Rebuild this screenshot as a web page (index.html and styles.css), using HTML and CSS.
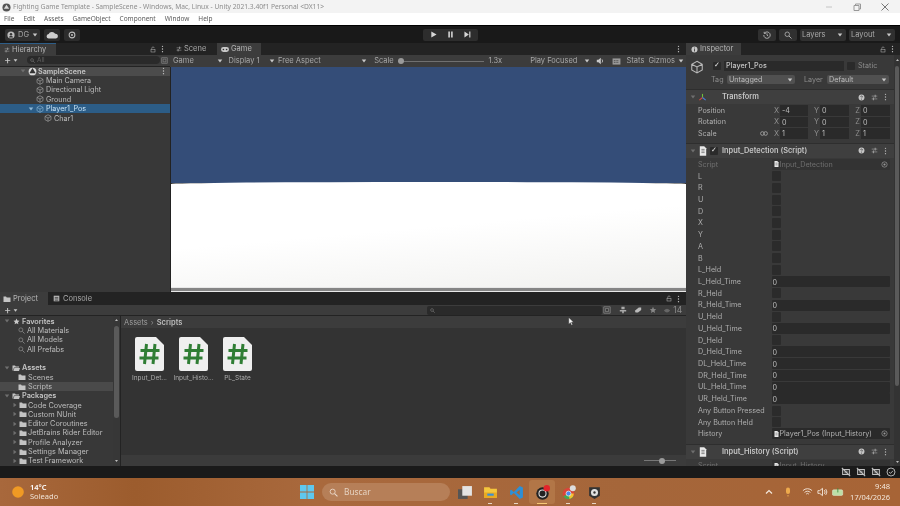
FILE: index.html
```html
<!DOCTYPE html>
<html lang="en">
<head>
<meta charset="utf-8">
<title>Unity Editor</title>
<link rel="stylesheet" href="styles.css">
</head>
<body>
<svg class="sprite" xmlns="http://www.w3.org/2000/svg">
  <symbol id="cube" viewBox="0 0 16 16"><path d="M8 1.500 14 4.800v6.600L8 14.700 2 11.400V4.800zM2 4.800 8 8l6-3.200M8 8v6.700" fill="none" stroke="currentColor" stroke-width="1.200"/></symbol>
  <symbol id="folder" viewBox="0 0 16 16"><path d="M1 3h5l1.500 2H15v9H1z" fill="currentColor"/></symbol>
  <symbol id="folderopen" viewBox="0 0 16 16"><path d="M1 3h5l1.500 2H14v2H4L2 13H1zM4.700 8H16l-2 6H2.800z" fill="currentColor"/></symbol>
  <symbol id="search" viewBox="0 0 16 16"><circle cx="6.500" cy="6.500" r="4.500" fill="none" stroke="currentColor" stroke-width="1.500"/><path d="m10 10 5 5" stroke="currentColor" stroke-width="1.800"/></symbol>
  <symbol id="dots" viewBox="0 0 4 12"><circle cx="2" cy="2" r="1"/><circle cx="2" cy="6" r="1"/><circle cx="2" cy="10" r="1"/></symbol>
  <symbol id="lock" viewBox="0 0 12 12"><path d="M3.500 5V3.200a2.500 2.200 0 0 1 5 0" fill="none" stroke="currentColor"/><rect x="2" y="5.500" width="8" height="5.500" fill="none" stroke="currentColor"/></symbol>
  <symbol id="caret" viewBox="0 0 8 8"><path d="M1 2h6L4 6z" fill="currentColor"/></symbol>
  <symbol id="tri" viewBox="0 0 8 8"><path d="M2 1v6l4-3z" fill="currentColor"/></symbol>
  <symbol id="help" viewBox="0 0 10 10"><circle cx="5" cy="5" r="4.200" fill="currentColor"/><path d="M3.700 4a1.300 1.200 0 1 1 1.900 1.100c-.5.300-.6.500-.6 1M5 7.200v.9" stroke="#3c3c3c" fill="none"/></symbol>
  <symbol id="sliders" viewBox="0 0 10 10"><path d="M1 3h8M1 7h8" stroke="currentColor"/><path d="M6 1v4M3.500 5v4" stroke="currentColor" stroke-width="1.500"/></symbol>
  <symbol id="pick" viewBox="0 0 10 10"><circle cx="5" cy="5" r="3.800" fill="none" stroke="currentColor"/><circle cx="5" cy="5" r="1.500" fill="currentColor"/></symbol>
  <symbol id="script" viewBox="0 0 10 12"><path d="M1 0h5.500L9 2.500V12H1z" fill="#e9e9e9"/><path d="M3 4h4M3 6h4M3 8h4" stroke="#555" stroke-width=".8"/></symbol>
  <symbol id="tray" viewBox="0 0 12 12"><path d="M2 3h8v6H2zM1 1l10 10" fill="none" stroke="currentColor" stroke-width="1.300"/><path d="M4 5h4M4 7h4" stroke="currentColor"/></symbol>
  <symbol id="csdoc" viewBox="0 0 29 34"><path d="M2 0h19l8 8v24a2 2 0 0 1-2 2H2a2 2 0 0 1-2-2V2a2 2 0 0 1 2-2z" fill="#efefef"/><path d="M11.500 7 9.500 27M20 7l-2 20M5.500 13.500h19M4.500 21h19" fill="none" stroke="#2f7d34" stroke-width="3"/></symbol>
</svg>

<div class="app">
  <header class="titlebar">
    <svg class="title-logo" viewBox="0 0 10 10"><circle cx="5" cy="5" r="4.500" fill="#555"/><path d="M5 2 8 6.500H2z" fill="#ddd"/></svg>
    <span class="title-text">Fighting Game Template - SampleScene - Windows, Mac, Linux - Unity 2021.3.40f1 Personal &lt;DX11&gt;</span>
    <div class="winctl">
      <svg class="winbtn" viewBox="0 0 10 10"><path d="M2 5h6" stroke="#c4c4c4"/></svg>
      <svg class="winbtn" viewBox="0 0 10 10"><path d="M2 3.500h5v5H2zM3.500 3.500V2h5v5H7" fill="none" stroke="#999"/></svg>
      <svg class="winbtn" viewBox="0 0 10 10"><path d="m1.500 1.500 7 7m0-7-7 7" stroke="#777"/></svg>
    </div>
  </header>
  <nav class="menubar">
    <span>File</span><span>Edit</span><span>Assets</span><span>GameObject</span><span>Component</span><span>Window</span><span>Help</span>
  </nav>

  <div class="toolbar">
    <div class="tb-left">
      <div class="tbtn tbtn-account">
        <svg class="ico8" viewBox="0 0 10 10"><circle cx="5" cy="5" r="4.500" fill="#bbb"/><circle cx="5" cy="4" r="1.500" fill="#333"/><path d="M2.500 8a2.500 2 0 0 1 5 0z" fill="#333"/></svg>
        <span>DG</span>
        <svg class="ico-caret"><use href="#caret"/></svg>
      </div>
      <div class="tbtn tbtn-icon">
        <svg class="ico-cloud" viewBox="0 0 14 9"><path d="M3 8.500a2.500 2.500 0 0 1-.3-5A4 3.500 0 0 1 10 3a2.800 2.800 0 0 1 1 5.500z" fill="#cfcfcf"/></svg>
      </div>
      <div class="tbtn tbtn-icon">
        <svg class="ico8" viewBox="0 0 10 10"><circle cx="5" cy="5" r="3.600" fill="none" stroke="#bbb" stroke-width="1.300"/><circle cx="5" cy="5" r="1.300" fill="#bbb"/></svg>
      </div>
    </div>
    <div class="playgroup">
      <svg class="playbtn" viewBox="0 0 8 8"><path d="M1.500 .5v7l6-3.500z" fill="#d6d6d6"/></svg>
      <svg class="playbtn playbtn-mid" viewBox="0 0 8 8"><path d="M1.500 .5h1.800v7H1.500zM4.700 .5h1.800v7H4.700z" fill="#d6d6d6"/></svg>
      <svg class="playbtn" viewBox="0 0 8 8"><path d="M.5 .5v7l5-3.500zM6 .5h1.300v7H6z" fill="#d6d6d6"/></svg>
    </div>
    <div class="tb-right">
      <div class="tbtn tbtn-hist">
        <svg class="ico8" viewBox="0 0 10 10"><path d="M2 2.500A4 4 0 1 1 1 5M1.500 1v2h2M5 3v2.300l1.500 1" fill="none" stroke="#ccc"/></svg>
      </div>
      <div class="tbtn tbtn-hist">
        <svg class="ico8 ico-grey"><use href="#search"/></svg>
      </div>
      <div class="tbtn tbtn-drop"><span>Layers</span><svg class="ico-caret"><use href="#caret"/></svg></div>
      <div class="tbtn tbtn-drop"><span>Layout</span><svg class="ico-caret"><use href="#caret"/></svg></div>
    </div>
  </div>

  <main class="workspace">
    <div class="leftcol">
      <div class="toprow">
        <section class="hierarchy">
          <div class="tabbar">
            <div class="tab tab-active tab-hier">
              <svg class="ico6"><use href="#sliders"/></svg><span>Hierarchy</span>
            </div>
            <div class="tab-tools">
              <svg class="ico-lock"><use href="#lock"/></svg>
              <svg class="ico-dots"><use href="#dots"/></svg>
            </div>
          </div>
          <div class="subbar subbar-hier">
            <span class="plus">+</span><svg class="ico-caret ico-caret-s"><use href="#caret"/></svg>
            <div class="searchbox">
              <svg class="ico-mini"><use href="#search"/></svg><span>All</span>
            </div>
            <svg class="ico-square" viewBox="0 0 10 10"><path d="M1 1h8v8H1zM3 3h4v4H3z" fill="none" stroke="#888"/></svg>
          </div>
          <div class="tree">
            <div class="row row-scene">
              <svg class="tri tri-open"><use href="#tri"/></svg>
              <svg class="ico-unity" viewBox="0 0 10 10"><circle cx="5" cy="5" r="4.300" fill="#ddd"/><path d="M5 1 8.500 7H1.500z" fill="#333"/></svg>
              <b>SampleScene</b>
              <svg class="ico-dots ico-dots-end"><use href="#dots"/></svg>
            </div>
            <div class="row indent1"><svg class="cube"><use href="#cube"/></svg><span>Main Camera</span></div>
            <div class="row indent1"><svg class="cube"><use href="#cube"/></svg><span>Directional Light</span></div>
            <div class="row indent1"><svg class="cube"><use href="#cube"/></svg><span>Ground</span></div>
            <div class="row row-sel indent0">
              <svg class="tri tri-open"><use href="#tri"/></svg>
              <svg class="cube"><use href="#cube"/></svg><span>Player1_Pos</span>
            </div>
            <div class="row indent2"><svg class="cube"><use href="#cube"/></svg><span>Char1</span></div>
          </div>
        </section>

        <section class="game">
          <div class="tabbar">
            <div class="tab tab-scene">
              <svg class="ico6"><use href="#sliders"/></svg><span>Scene</span>
            </div>
            <div class="tab tab-active tab-game">
              <svg class="ico-pad" viewBox="0 0 10 6"><rect width="10" height="6" rx="3" fill="#c8c8c8"/><circle cx="3" cy="3" r="1" fill="#333"/><circle cx="7" cy="3" r="1" fill="#333"/></svg>
              <span>Game</span>
            </div>
            <div class="tab-tools">
              <svg class="ico-dots"><use href="#dots"/></svg>
            </div>
          </div>
          <div class="gamebar">
            <div class="gb gb-game"><span>Game</span><svg class="ico-caret"><use href="#caret"/></svg></div>
            <div class="gb gb-display"><span>Display 1</span><svg class="ico-caret"><use href="#caret"/></svg></div>
            <div class="gb gb-aspect"><span>Free Aspect</span><svg class="ico-caret"><use href="#caret"/></svg></div>
            <div class="gb gb-scale">
              <span>Scale</span>
              <div class="slider"><i class="thumb"></i></div>
              <span>1.3x</span>
            </div>
            <div class="gb gb-play"><span>Play Focused</span><svg class="ico-caret"><use href="#caret"/></svg></div>
            <svg class="gb-audio" viewBox="0 0 10 10"><path d="M1 3.500h2L6 1v8L3 6.500H1z" fill="#c8c8c8"/><path d="M7.500 3a3 3 0 0 1 0 4" stroke="#c8c8c8" fill="none"/></svg>
            <svg class="gb-grid" viewBox="0 0 10 8"><path d="M.5.500h9v7h-9z" fill="#999"/><path d="M2 3h6M2 5h6" stroke="#333" stroke-dasharray="1 1"/></svg>
            <span class="gb-stats">Stats</span>
            <div class="gb gb-gizmos"><span>Gizmos</span><svg class="ico-caret"><use href="#caret"/></svg></div>
          </div>
          <div class="viewport">
            <div class="sky"></div>
            <div class="ground"></div>
            <div class="hscroll"></div>
          </div>
        </section>
      </div>

      <section class="project">
        <div class="tabbar tabbar-project">
          <div class="tab tab-active tab-proj">
            <svg class="ico-folder"><use href="#folder"/></svg><span>Project</span>
          </div>
          <div class="tab tab-console">
            <svg class="ico-cons" viewBox="0 0 10 10"><path d="M1 1h8v8H1z" fill="#b5b5b5"/><path d="M2.500 3.500h5M2.500 5.500h5M2.500 7.500h5" stroke="#333"/></svg>
            <span>Console</span>
          </div>
          <div class="tab-tools">
            <svg class="ico-lock"><use href="#lock"/></svg>
            <svg class="ico-dots"><use href="#dots"/></svg>
          </div>
        </div>
        <div class="subbar subbar-project">
          <span class="plus">+</span><svg class="ico-caret ico-caret-s"><use href="#caret"/></svg>
          <div class="searchbox searchbox-proj"><svg class="ico-mini"><use href="#search"/></svg></div>
          <svg class="ptool" viewBox="0 0 10 10"><path d="M1 1h8v8H1zM3 3h4v4H3z" fill="none" stroke="#888"/></svg>
          <svg class="ptool" viewBox="0 0 10 10"><path d="M3 1h4v3H3zM1 5h8v2H6v2H4V7H1z" fill="#aaa"/></svg>
          <svg class="ptool" viewBox="0 0 10 10"><path d="M1 6 6 2h3v3L5 8H2z" fill="#bbb"/></svg>
          <svg class="ptool" viewBox="0 0 10 10"><path d="m5 1 1.200 2.700 2.800.3-2.100 1.900.6 2.800L5 7.300 2.500 8.700l.6-2.800L1 4l2.800-.3z" fill="#888"/></svg>
          <div class="hidden-count">
            <svg class="ptool-eye" viewBox="0 0 12 8"><path d="M1 4q5-6 10 0-5 6-10 0z" fill="#666"/></svg>
            <span>14</span>
          </div>
        </div>
        <div class="projbody">
          <div class="projtree">
            <div class="projlist">
              <div class="row"><svg class="tri tri-open"><use href="#tri"/></svg><svg class="ico-star" viewBox="0 0 10 10"><path d="m5 .8 1.300 2.800 3 .4-2.200 2 .6 3L5 7.500 2.300 9l.6-3L.7 4l3-.4z" fill="#c8c8c8"/></svg><b>Favorites</b></div>
              <div class="row pindent"><svg class="ico-find"><use href="#search"/></svg><span>All Materials</span></div>
              <div class="row pindent"><svg class="ico-find"><use href="#search"/></svg><span>All Models</span></div>
              <div class="row pindent"><svg class="ico-find"><use href="#search"/></svg><span>All Prefabs</span></div>
              <div class="row"></div>
              <div class="row"><svg class="tri tri-open"><use href="#tri"/></svg><svg class="ico-folder"><use href="#folderopen"/></svg><b>Assets</b></div>
              <div class="row pindent"><svg class="ico-folder"><use href="#folder"/></svg><span>Scenes</span></div>
              <div class="row pindent row-hl"><svg class="ico-folder"><use href="#folder"/></svg><span>Scripts</span></div>
              <div class="row"><svg class="tri tri-open"><use href="#tri"/></svg><svg class="ico-folder"><use href="#folderopen"/></svg><b>Packages</b></div>
              <div class="row pkg"><svg class="tri"><use href="#tri"/></svg><svg class="ico-folder"><use href="#folder"/></svg><span>Code Coverage</span></div>
              <div class="row pkg"><svg class="tri"><use href="#tri"/></svg><svg class="ico-folder"><use href="#folder"/></svg><span>Custom NUnit</span></div>
              <div class="row pkg"><svg class="tri"><use href="#tri"/></svg><svg class="ico-folder"><use href="#folder"/></svg><span>Editor Coroutines</span></div>
              <div class="row pkg"><svg class="tri"><use href="#tri"/></svg><svg class="ico-folder"><use href="#folder"/></svg><span>JetBrains Rider Editor</span></div>
              <div class="row pkg"><svg class="tri"><use href="#tri"/></svg><svg class="ico-folder"><use href="#folder"/></svg><span>Profile Analyzer</span></div>
              <div class="row pkg"><svg class="tri"><use href="#tri"/></svg><svg class="ico-folder"><use href="#folder"/></svg><span>Settings Manager</span></div>
              <div class="row pkg"><svg class="tri"><use href="#tri"/></svg><svg class="ico-folder"><use href="#folder"/></svg><span>Test Framework</span></div>
            </div>
            <div class="vscroll vscroll-proj">
              <svg class="arrow arrow-up"><use href="#caret"/></svg>
              <i class="vthumb vthumb-proj"></i>
              <svg class="arrow arrow-down"><use href="#caret"/></svg>
            </div>
          </div>
          <div class="projmain">
            <div class="crumbs"><span>Assets</span><span class="crumb-sep">›</span><b>Scripts</b></div>
            <div class="assets">
              <figure class="asset"><svg class="doc"><use href="#csdoc"/></svg><figcaption>Input_Det...</figcaption></figure>
              <figure class="asset"><svg class="doc"><use href="#csdoc"/></svg><figcaption>Input_Histo...</figcaption></figure>
              <figure class="asset"><svg class="doc"><use href="#csdoc"/></svg><figcaption>PL_State</figcaption></figure>
            </div>
            <div class="projfoot"><div class="zoomslider"><i class="zoomthumb"></i></div></div>
          </div>
        </div>
      </section>
    </div>

    <aside class="inspector">
      <div class="tabbar">
        <div class="tab tab-active tab-insp">
          <svg class="ico-info" viewBox="0 0 10 10"><circle cx="5" cy="5" r="4.300" fill="#c8c8c8"/><path d="M5 2.300v1.200M5 4.500v3.300" stroke="#3c3c3c" stroke-width="1.300"/></svg>
          <span>Inspector</span>
        </div>
        <div class="tab-tools">
          <svg class="ico-lock"><use href="#lock"/></svg>
          <svg class="ico-dots"><use href="#dots"/></svg>
        </div>
      </div>
      <div class="insp-wrap">
        <div class="insp-content">
          <div class="objhead">
            <svg class="objcube"><use href="#cube"/></svg>
            <div class="objlines">
              <div class="objline">
                <span class="check check-on">✓</span>
                <div class="namefield">Player1_Pos</div>
                <span class="check"></span>
                <span class="dim">Static</span>
                <svg class="ico-caret"><use href="#caret"/></svg>
              </div>
              <div class="objline objline2">
                <span class="dim tag-l">Tag</span>
                <div class="dropdown dd-tag"><span>Untagged</span><svg class="ico-caret"><use href="#caret"/></svg></div>
                <span class="dim layer-l">Layer</span>
                <div class="dropdown dd-layer"><span>Default</span><svg class="ico-caret"><use href="#caret"/></svg></div>
              </div>
            </div>
          </div>

          <div class="comp-head comp-first">
            <svg class="tri tri-open"><use href="#tri"/></svg>
            <svg class="comp-ico" viewBox="0 0 10 10"><path d="M5 5V1" stroke="#6fbf3a" stroke-width="1.200"/><path d="M5 5 1.500 8" stroke="#d9473a" stroke-width="1.200"/><path d="M5 5l3.500 3" stroke="#4a7fd9" stroke-width="1.200"/></svg>
            <b class="comp-title-t">Transform</b>
            <div class="comp-tools">
              <svg class="ct-help"><use href="#help"/></svg>
              <svg class="ct-sl"><use href="#sliders"/></svg>
              <svg class="ct-dots"><use href="#dots"/></svg>
            </div>
          </div>
          <div class="vec-row">
            <span class="lbl">Position</span><span></span>
            <span class="ax">X</span><span class="vf">-4</span><span class="ax">Y</span><span class="vf">0</span><span class="ax">Z</span><span class="vf">0</span>
          </div>
          <div class="vec-row">
            <span class="lbl">Rotation</span><span></span>
            <span class="ax">X</span><span class="vf">0</span><span class="ax">Y</span><span class="vf">0</span><span class="ax">Z</span><span class="vf">0</span>
          </div>
          <div class="vec-row">
            <span class="lbl">Scale</span>
            <svg class="link" viewBox="0 0 10 6"><circle cx="3" cy="3" r="2.300" fill="none" stroke="#aaa"/><circle cx="7" cy="3" r="2.300" fill="none" stroke="#aaa"/></svg>
            <span class="ax">X</span><span class="vf">1</span><span class="ax">Y</span><span class="vf">1</span><span class="ax">Z</span><span class="vf">1</span>
          </div>

          <div class="comp-head comp-second">
            <svg class="tri tri-open"><use href="#tri"/></svg>
            <svg class="comp-script"><use href="#script"/></svg>
            <span class="check check-on check-comp">✓</span>
            <b>Input_Detection (Script)</b>
            <div class="comp-tools">
              <svg class="ct-help"><use href="#help"/></svg>
              <svg class="ct-sl"><use href="#sliders"/></svg>
              <svg class="ct-dots"><use href="#dots"/></svg>
            </div>
          </div>
          <div class="prop prop-script">
            <span class="lbl lbl-dim">Script</span>
            <div class="objfield objfield-dim">
              <svg class="of-ico"><use href="#script"/></svg><span>Input_Detection</span>
              <svg class="of-pick"><use href="#pick"/></svg>
            </div>
          </div>
          <div class="prop"><span class="lbl">L</span><span class="cb"></span></div>
          <div class="prop"><span class="lbl">R</span><span class="cb"></span></div>
          <div class="prop"><span class="lbl">U</span><span class="cb"></span></div>
          <div class="prop"><span class="lbl">D</span><span class="cb"></span></div>
          <div class="prop"><span class="lbl">X</span><span class="cb"></span></div>
          <div class="prop"><span class="lbl">Y</span><span class="cb"></span></div>
          <div class="prop"><span class="lbl">A</span><span class="cb"></span></div>
          <div class="prop"><span class="lbl">B</span><span class="cb"></span></div>
          <div class="prop"><span class="lbl">L_Held</span><span class="cb"></span></div>
          <div class="prop"><span class="lbl">L_Held_Time</span><span class="numf">0</span></div>
          <div class="prop"><span class="lbl">R_Held</span><span class="cb"></span></div>
          <div class="prop"><span class="lbl">R_Held_Time</span><span class="numf">0</span></div>
          <div class="prop"><span class="lbl">U_Held</span><span class="cb"></span></div>
          <div class="prop"><span class="lbl">U_Held_Time</span><span class="numf">0</span></div>
          <div class="prop"><span class="lbl">D_Held</span><span class="cb"></span></div>
          <div class="prop"><span class="lbl">D_Held_Time</span><span class="numf">0</span></div>
          <div class="prop"><span class="lbl">DL_Held_Time</span><span class="numf">0</span></div>
          <div class="prop"><span class="lbl">DR_Held_Time</span><span class="numf">0</span></div>
          <div class="prop"><span class="lbl">UL_Held_Time</span><span class="numf">0</span></div>
          <div class="prop"><span class="lbl">UR_Held_Time</span><span class="numf">0</span></div>
          <div class="prop"><span class="lbl">Any Button Pressed</span><span class="cb"></span></div>
          <div class="prop"><span class="lbl">Any Button Held</span><span class="cb"></span></div>
          <div class="prop">
            <span class="lbl">History</span>
            <div class="objfield">
              <svg class="of-ico"><use href="#script"/></svg><span>Player1_Pos (Input_History)</span>
              <svg class="of-pick"><use href="#pick"/></svg>
            </div>
          </div>

          <div class="comp-head comp-third">
            <svg class="tri tri-open"><use href="#tri"/></svg>
            <svg class="comp-script"><use href="#script"/></svg>
            <b class="comp-title-h">Input_History (Script)</b>
            <div class="comp-tools">
              <svg class="ct-help"><use href="#help"/></svg>
              <svg class="ct-sl"><use href="#sliders"/></svg>
              <svg class="ct-dots"><use href="#dots"/></svg>
            </div>
          </div>
          <div class="prop prop-script">
            <span class="lbl lbl-dim">Script</span>
            <div class="objfield objfield-dim"><svg class="of-ico"><use href="#script"/></svg><span>Input_History</span></div>
          </div>
        </div>
        <div class="vscroll vscroll-insp">
          <svg class="arrow arrow-up"><use href="#caret"/></svg>
          <i class="vthumb vthumb-insp"></i>
          <svg class="arrow arrow-down"><use href="#caret"/></svg>
        </div>
      </div>
    </aside>
  </main>

  <div class="statusbar">
    <svg class="st-ico"><use href="#tray"/></svg>
    <svg class="st-ico"><use href="#tray"/></svg>
    <svg class="st-ico"><use href="#tray"/></svg>
    <svg class="st-ico" viewBox="0 0 12 12"><circle cx="6" cy="6" r="4.800" fill="none" stroke="#ccc"/><path d="m3.800 6 1.600 1.700 3-3.200" fill="none" stroke="#ccc"/></svg>
  </div>

  <footer class="taskbar">
    <div class="weather">
      <svg class="sun" viewBox="0 0 12 12"><circle cx="6" cy="6" r="5.800" fill="#f09a24"/></svg>
      <div class="weather-txt"><span class="temp">14°C</span><span>Soleado</span></div>
    </div>
    <div class="tb-center">
      <svg class="winlogo" viewBox="0 0 14 14"><path d="M0 0h6.600v6.600H0zM7.400 0H14v6.600H7.400zM0 7.400h6.600V14H0zM7.400 7.400H14V14H7.400z" fill="#5fc8ee"/></svg>
      <div class="tsearch"><svg class="ts-ico"><use href="#search"/></svg><span>Buscar</span></div>
      <div class="apps">
        <div class="app-i app-first"><svg class="app-svg" viewBox="0 0 14 14"><rect x="0" y="4" width="9" height="9" fill="#555"/><rect x="4" y="1" width="9" height="9" fill="#e4e4e4"/></svg></div>
        <div class="app-i app-run"><svg class="app-svg" viewBox="0 0 14 14"><path d="M1 2h5l1 1.500h6V12H1z" fill="#f5c63c"/><rect x="1" y="7" width="12" height="5" fill="#e8a922"/><rect x="4" y="8" width="6" height="2" fill="#3b8fd6"/></svg></div>
        <div class="app-i app-run"><svg class="app-svg" viewBox="0 0 14 14"><path d="M10 1 4.500 6.500 2 4.500 1 5.200v3.600l1 .7 2.500-2L10 13l3-1.300V2.300zM10 4.500v5L7 7z" fill="#2d8fd5"/></svg></div>
        <div class="app-i app-active"><svg class="app-svg" viewBox="0 0 14 14"><circle cx="7" cy="8" r="5.800" fill="#222"/><circle cx="7" cy="8" r="3.300" fill="none" stroke="#ddd"/><circle cx="11" cy="3" r="3" fill="#e3242b"/></svg></div>
        <div class="app-i app-run"><svg class="app-svg" viewBox="0 0 14 14"><circle cx="7" cy="8" r="5.500" fill="#d9453a"/><path d="M2.200 10.500 7 8l4.800 2.500A5.500 5.500 0 0 1 2.200 10.500z" fill="#44a853"/><path d="M7 8l5 0a5.500 5.500 0 0 1-4 5z" fill="#f4c430"/><circle cx="7" cy="8" r="2.300" fill="#4a8af0" stroke="#eee" stroke-width=".7"/><circle cx="11" cy="3" r="2.800" fill="#ddd"/></svg></div>
        <div class="app-i app-run"><svg class="app-svg" viewBox="0 0 14 14"><path d="M2 2h10v8l-5 3-5-3z" fill="#333"/><circle cx="7" cy="7" r="3.300" fill="#e2e2e2"/><circle cx="7" cy="7" r="1.100" fill="#333"/></svg></div>
      </div>
    </div>
    <div class="systray">
      <svg class="tr-i tr-chev" viewBox="0 0 10 10"><path d="m2 6.500 3-3 3 3" fill="none" stroke="#f4e9de" stroke-width="1.200"/></svg>
      <svg class="tr-i tr-mic" viewBox="0 0 10 10"><rect x="3" y=".5" width="4" height="6.500" rx="2" fill="#eeaa4c"/><path d="M5 8v1.500" stroke="#eeaa4c"/></svg>
      <svg class="tr-i tr-wifi" viewBox="0 0 12 10"><path d="M1 3.500a7 7 0 0 1 10 0M2.800 5.500a4.500 4.500 0 0 1 6.400 0M4.500 7.300a2 2 0 0 1 3 0" fill="none" stroke="#f2e6da"/></svg>
      <svg class="tr-i tr-vol" viewBox="0 0 12 10"><path d="M1 3.500h2L6 1v8L3 6.500H1z" fill="none" stroke="#f2e6da"/><path d="M8 3a3 3 0 0 1 0 4M9.500 1.800a5 5 0 0 1 0 6.400" fill="none" stroke="#f2e6da"/></svg>
      <svg class="tr-i tr-bat" viewBox="0 0 14 10"><rect x=".5" y="2.500" width="12" height="6.500" rx="1.500" fill="#bde0a8" stroke="#e4efd8" stroke-width=".6"/><path d="M6.800 .5v5" stroke="#3d8f3d"/></svg>
      <div class="clock"><span>9:48</span><span>17/04/2026</span></div>
    </div>
  </footer>

  <svg class="cursor" viewBox="0 0 8 12"><path d="M1 .5v9l2.200-2 1.500 3.500 1.500-.7L4.700 7h2.800z" fill="#f5f5f5" stroke="#222" stroke-width=".5"/></svg>
</div>
</body>
</html>
```

FILE: styles.css
```css
* { box-sizing: border-box; }
html, body { margin: 0; padding: 0; height: 100%; background: #191919; overflow: hidden; }
.sprite { display: none; }
svg { display: block; flex: none; }

.app {
  position: relative;
  width: 900px;
  height: 506px;
  display: flex;
  flex-direction: column;
  font: 7.500px/1 Inter, "Noto Sans", sans-serif;
  color: #bdbdbd;
  filter: blur(.35px);
  overflow: hidden;
}

/* window chrome */
.titlebar {
  height: 13px;
  padding: 1px 0 0 2px;
  background: #f3f3f3;
  display: flex;
  align-items: center;
  color: #8d8d8d;
  font: 6.700px/1 "Noto Sans", sans-serif;
}
.title-logo { width: 9px; height: 9px; margin-right: 2px; }
.title-text { white-space: nowrap; }
.winctl { margin-left: auto; display: flex; gap: 18px; padding-right: 10px; }
.winbtn { width: 10px; height: 10px; }
.menubar {
  height: 12px;
  padding: 1px 0 0 4px;
  background: #fff;
  display: flex;
  align-items: center;
  gap: 9px;
  color: #5b5b5b;
  font: 6.500px/1 "Noto Sans", sans-serif;
}

/* main toolbar */
.toolbar {
  height: 18px;
  background: #191919;
  border-top: 1px solid #000;
  display: grid;
  grid-template-columns: 1fr auto 1fr;
  align-items: center;
  padding: 0 5px;
}
.tb-left, .tb-right { display: flex; align-items: center; gap: 4px; }
.tb-right { justify-content: flex-end; gap: 3px; }
.tbtn {
  height: 12px;
  background: #303030;
  border-radius: 2px;
  display: flex;
  align-items: center;
  justify-content: center;
  color: #a8a8a8;
}
.tbtn-account { width: 35px; gap: 3px; }
.tbtn-icon { width: 16px; background: #2c2c2c; }
.tbtn-hist { width: 18px; }
.tbtn-drop { width: 46px; justify-content: space-between; padding: 0 3px 0 2px; }
.ico8 { width: 8px; height: 8px; }
.ico-grey { color: #bbb; }
.ico-cloud { width: 13px; height: 8px; }
.ico-caret { width: 6px; height: 6px; color: #c8c8c8; }
.playgroup {
  width: 55px;
  height: 12px;
  background: #2d2d2d;
  border-radius: 2px;
  display: flex;
  align-items: center;
  justify-content: space-around;
  padding: 0 2px;
}
.playbtn { width: 7px; height: 7px; }

.workspace { flex: 1; min-height: 0; display: flex; background: #191919; }
.leftcol { width: 686px; display: flex; flex-direction: column; }
.toprow { height: 249px; display: flex; }

/* tabs */
.tabbar {
  height: 12px;
  background: #232323;
  display: flex;
  align-items: stretch;
}
.tab {
  display: flex;
  align-items: center;
  gap: 2px;
  padding-left: 4px;
  color: #a9a9a9;
}
.tab-active { background: #3c3c3c; color: #b6b6b6; }
.tab-hier { width: 56px; border-top: 1px solid #2d5d88; }
.tab-scene { width: 47px; padding-left: 6px; }
.tab-game { width: 44px; }
.tab-proj { width: 48px; padding-left: 3px; }
.tab-console { width: 44px; padding-left: 5px; gap: 3px; }
.tab-insp { width: 55px; padding-left: 5px; gap: 2px; }
.tab-tools {
  margin-left: auto;
  display: flex;
  align-items: center;
  gap: 5px;
  padding-right: 6px;
  color: #bcbcbc;
}
.ico6 { width: 6px; height: 6px; color: #999; }
.ico-pad { width: 8px; height: 5px; }
.ico-lock { width: 6px; height: 7px; color: #bcbcbc; }
.ico-dots { width: 3px; height: 8px; fill: #c8c8c8; }
.ico-info { width: 7px; height: 7px; }
.ico-folder { width: 8px; height: 8px; color: #c4c4c4; }
.ico-cons { width: 7px; height: 7px; }

.subbar {
  height: 12px;
  background: #3c3c3c;
  display: flex;
  align-items: center;
  padding-left: 4px;
  border-bottom: 1px solid #232323;
}
.subbar-hier { height: 11.500px; }
.plus { font-size: 11px; line-height: 8px; color: #c8c8c8; width: 8px; }
.ico-caret-s { width: 5px; height: 5px; margin-left: 1px; }
.searchbox {
  margin-left: 9px;
  width: 133px;
  height: 8px;
  background: #2a2a2a;
  border-radius: 4px;
  display: flex;
  align-items: center;
  gap: 2px;
  padding-left: 3px;
  color: #5f5f5f;
  font-size: 6.500px;
}
.ico-mini { width: 5px; height: 5px; color: #8b8b8b; }
.ico-square { width: 7px; height: 7px; margin-left: 1px; }

/* hierarchy */
.hierarchy { width: 170px; background: #383838; display: flex; flex-direction: column; }
.tree { flex: 1; background: #383838; font-size: 7.200px; }
.row {
  height: 9.400px;
  display: flex;
  align-items: center;
  white-space: nowrap;
  gap: 2px;
  color: #bcbcbc;
}
.row b { font-weight: 600; color: #c4c4c4; }
.tri { width: 6px; height: 6px; color: #6f6f6f; }
.tri-open { transform: rotate(90deg); }
.row-scene { background: #4c4c4c; padding-left: 20px; gap: 1.500px; }
.ico-unity { width: 9px; height: 9px; }
.ico-dots-end { margin-left: auto; margin-right: 5px; }
.cube { width: 8px; height: 8px; color: #a9a9a9; }
.indent1 { padding-left: 36px; }
.indent0 { padding-left: 28px; }
.indent2 { padding-left: 44px; }
.row-sel { background: #2c5d87; color: #c6e2f6; }
.row-sel .cube, .row-sel .tri { color: #8fb8d6; }

/* game */
.game { width: 516px; display: flex; flex-direction: column; }
.gamebar {
  height: 12px;
  background: #3c3c3c;
  display: flex;
  align-items: center;
  padding-left: 3px;
  color: #a8a8a8;
}
.gb { display: flex; align-items: center; justify-content: space-between; white-space: nowrap; }
.gb-game { width: 50px; }
.gb-display { width: 47px; margin-left: 6px; }
.gb-aspect { width: 90px; margin-left: 3px; }
.gb-scale { width: 128px; margin-left: 7px; gap: 4.500px; justify-content: flex-start; }
.slider {
  width: 88px;
  height: 1px;
  background: #707070;
  position: relative;
}
.thumb {
  position: absolute;
  left: 0;
  top: -2.500px;
  width: 6px;
  height: 6px;
  border-radius: 50%;
  background: #9a9a9a;
}
.gb-play { width: 60px; margin-left: 28px; }
.gb-audio { width: 8px; height: 8px; margin-left: 6px; }
.gb-grid { width: 9px; height: 7px; margin-left: 8px; }
.gb-stats { margin-left: 6px; }
.gb-gizmos { width: 38px; margin-left: 4px; padding-right: 2px; }
.viewport {
  flex: 1;
  display: flex;
  flex-direction: column;
  padding-left: 1px;
  background: #222;
}
.sky { height: 116px; background: #344d78; }
.ground {
  flex: 1;
  background: linear-gradient(175deg, #ffffff 45%, #f1f1ef 100%);
  border-radius: 50% 50% 0 0 / 2px 2px 0 0;
  margin-top: -1px;
}
.hscroll { height: 5px; background: #858585; border-top: 1px solid #e8e8e8; border-bottom: 1px solid #e8e8e8; }

/* project */
.project { flex: 1; min-height: 0; background: #333; display: flex; flex-direction: column; }
.tabbar-project { height: 13px; }
.subbar-project { height: 11px; }
.searchbox-proj { margin-left: 409px; width: 175px; border-radius: 2px; height: 9px; }
.ptool { width: 8px; height: 8px; margin-left: 1.300px; margin-right: 6px; }
.hidden-count {
  display: flex;
  align-items: center;
  gap: 2px;
  color: #8a8a8a;
  font-size: 8.500px;
  margin-left: 0;
}
.ptool-eye { width: 8px; height: 5px; }
.projbody { flex: 1; min-height: 0; display: flex; }
.projtree { width: 121px; display: flex; background: #383838; border-right: 1px solid #232323; overflow: hidden; }
.projlist { flex: 1; padding: .85px 0 0 4px; min-width: 0; font-size: 7.300px; }
.projlist .row { height: 9.300px; }
.ico-star { width: 7px; height: 7px; margin-left: 1px; }
.ico-find { width: 7px; height: 7px; color: #8f8f8f; }
.pindent { gap: 2px; margin-left: -4px; padding-left: 18px; }
.row-hl { background: #4a4a4a; }
.pkg { padding-left: 8px; gap: 1px; }
.vscroll {
  width: 7px;
  background: #373737;
  padding: 2px 1px;
  display: flex;
  flex-direction: column;
  align-items: center;
}
.arrow { width: 5px; height: 4px; color: #bdbdbd; }
.arrow-up { transform: rotate(180deg); }
.arrow-down { margin-top: auto; margin-bottom: 1px; }
.vthumb { display: block; width: 100%; background: #5a5a5a; border-radius: 3px; margin-top: 4px; }
.vthumb-proj { height: 92px; }
.projmain { flex: 1; display: flex; flex-direction: column; background: #333; }
.crumbs {
  height: 12px;
  padding: 1px 0 0 3px;
  background: #3c3c3c;
  display: flex;
  align-items: center;
  gap: 3px;
  color: #9c9c9c;
}
.crumbs b { font-weight: 600; color: #bdbdbd; }
.crumb-sep { color: #8a8a8a; }
.assets { flex: 1; display: flex; padding: 9px 0 0 14px; gap: 15px; }
.asset { margin: 0; width: 29px; display: flex; flex-direction: column; align-items: center; }
.doc { width: 29px; height: 34px; }
figcaption {
  margin-top: 3.500px;
  font-size: 6.500px;
  white-space: nowrap;
  color: #aaaaaa;
}
.projfoot {
  height: 11px;
  background: #3b3b3b;
  display: flex;
  align-items: center;
  justify-content: flex-end;
  padding-right: 10px;
}
.zoomslider { width: 32px; height: 1px; background: #777; position: relative; }
.zoomthumb {
  position: absolute;
  left: 15px;
  top: -2.500px;
  width: 6px;
  height: 6px;
  border-radius: 50%;
  background: #9a9a9a;
}

/* inspector */
.inspector { width: 214px; display: flex; flex-direction: column; background: #393939; min-height: 0; }
.insp-wrap { flex: 1; min-height: 0; display: flex; overflow: hidden; }
.insp-content { flex: 1; min-width: 0; overflow: hidden; font-size: 7.200px; }
.vscroll-insp { width: 6px; padding: 3px 1px 1px; background: #333; }
.vthumb-insp { height: 320px; }
.objhead { height: 33px; display: flex; padding: 5px 0 0 4px; }
.objcube { width: 14px; height: 14px; margin-top: 0; color: #b9b9b9; }
.objlines { flex: 1; margin-left: 9px; }
.objline { display: flex; align-items: center; height: 11px; gap: 3px; color: #b5b5b5; }
.check {
  width: 8px;
  height: 8px;
  background: #2a2a2a;
  border-radius: 1px;
  color: #e6e6e6;
  display: flex;
  align-items: center;
  justify-content: center;
  font: 700 7px/1 "DejaVu Sans", sans-serif;
  flex: none;
}
.check-on { background: #2a2a2a; }
.namefield {
  width: 120px;
  height: 10px;
  background: #2a2a2a;
  padding: 1.500px 0 0 2px;
  color: #c4c4c4;
  font-weight: 500;
}
.dim { color: #8c8c8c; }
.objline .ico-caret { margin-left: 15px; }
.objline2 { margin-top: 3px; margin-left: -2px; gap: 2px; }
.tag-l { width: 14px; }
.layer-l { margin-left: 7px; width: 21px; }
.dropdown {
  height: 9px;
  background: #505050;
  border-radius: 2px;
  display: flex;
  align-items: center;
  justify-content: space-between;
  padding: 0 2px;
  color: #bdbdbd;
}
.objline .dropdown .ico-caret { margin-left: 0; }
.dd-tag { width: 68px; }
.dd-layer { width: 62px; }

.comp-head {
  display: flex;
  align-items: center;
  height: 15px;
  background: #3f3f3f;
  border-top: 1px solid #2e2e2e;
  padding-left: 4px;
  color: #c4c4c4;
  font-size: 7.400px;
}
.comp-head b { font-weight: 600; white-space: nowrap; }
.comp-first { margin-top: 1px; margin-bottom: .5px; }
.comp-second { margin-top: 3px; }
.comp-third { margin-top: 4px; }
.comp-ico { width: 9px; height: 9px; margin-left: 2px; }
.comp-title-t { margin-left: 15px; }
.comp-title-h { margin-left: 15px; }
.comp-script { width: 8px; height: 10px; margin-left: 3px; }
.check-comp { margin: 0 4px 0 3px; }
.comp-tools { margin-left: auto; display: flex; align-items: center; gap: 6px; padding-right: 7.500px; color: #bbb; }
.ct-help { width: 7px; height: 7px; color: #c4c4c4; }
.ct-sl { width: 7px; height: 7px; color: #9a9a9a; }
.ct-dots { width: 3px; height: 8px; fill: #bbb; }

.vec-row {
  display: grid;
  grid-template-columns: 62px 13px 7px 28px 12px 29px 12px 29px;
  height: 11.700px;
  align-items: center;
  padding-left: 12px;
  color: #b0b0b0;
}
.vf {
  height: 10.500px;
  background: #2a2a2a;
  padding: 2px 0 0 2px;
  color: #bdbdbd;
}
.ax { color: #8f8f8f; font-size: 7.400px; text-align: right; padding-right: 1px; }
.link { width: 8px; height: 5px; }
.prop {
  display: grid;
  grid-template-columns: 73.500px 118px;
  height: 11.730px;
  align-items: center;
  padding-left: 12px;
  color: #adadad;
}
.prop-script { margin-top: 1px; }
.lbl { white-space: nowrap; }
.lbl-dim { color: #717171; }
.cb { width: 9px; height: 10px; background: #2b2b2b; border-radius: 1px; }
.numf { height: 11px; background: #2a2a2a; border-radius: 1px; padding: 2.500px 0 0 1px; color: #bdbdbd; }
.objfield {
  height: 11px;
  background: #2a2a2a;
  display: flex;
  align-items: center;
  gap: 1px;
  padding-left: 2px;
  white-space: nowrap;
  color: #b2b2b2;
  border-radius: 1px;
}
.objfield-dim { background: #333; color: #6e6e6e; }
.of-ico { width: 5px; height: 6px; }
.of-pick { width: 7px; height: 7px; margin-left: auto; margin-right: 2px; color: #999; }

/* status bar */
.statusbar {
  height: 12px;
  background: #1a1a1a;
  display: flex;
  align-items: center;
  justify-content: flex-end;
  gap: 5px;
  padding-right: 4px;
  color: #c2c2c2;
}
.st-ico { width: 10px; height: 10px; }

/* taskbar */
.taskbar {
  height: 28px;
  background: linear-gradient(90deg, #a8683c 0%, #9c5c2d 15%, #a9693d 35%, #a5663a 70%, #a76436 100%);
  display: grid;
  grid-template-columns: 300px 1fr auto;
  align-items: center;
  color: #f0e3d6;
  font: 7.500px/1 "Noto Sans", sans-serif;
}
.weather { display: flex; align-items: center; gap: 6px; padding-left: 12px; }
.sun { width: 12px; height: 12px; }
.weather-txt { display: flex; flex-direction: column; gap: 2px; }
.temp { font-weight: 600; color: #fff; }
.tb-center { display: flex; align-items: center; }
.winlogo { width: 14px; height: 14px; }
.tsearch {
  margin-left: 8px;
  width: 128px;
  height: 18px;
  border-radius: 9px;
  background: #b67f58;
  display: flex;
  align-items: center;
  gap: 6px;
  padding-left: 7px;
  color: #e6d2c0;
  font-size: 8.300px;
}
.ts-ico { width: 9px; height: 9px; color: #ecdccd; }
.apps { display: flex; margin-left: 3px; }
.app-i {
  width: 26px;
  height: 24px;
  display: flex;
  align-items: center;
  justify-content: center;
  position: relative;
  border-radius: 3px;
}
.app-first { width: 24px; }
.app-svg { width: 15px; height: 15px; }
.app-active { background: #b27647; }
.app-run::after, .app-active::after {
  content: "";
  position: absolute;
  left: 11px;
  bottom: 0;
  width: 4px;
  height: 1px;
  background: #e6d6c6;
}
.app-active::after { left: 8px; width: 10px; background: #f6c977; }
.systray { display: flex; align-items: center; padding-right: 10px; }
.tr-i { width: 10px; height: 10px; }
.tr-chev { margin-right: 9px; }
.tr-mic { margin-right: 9px; }
.tr-wifi { width: 11px; margin-right: 4px; }
.tr-vol { width: 11px; margin-right: 4px; }
.tr-bat { width: 12px; margin-right: 6px; }
.clock { display: flex; flex-direction: column; align-items: flex-end; gap: 3px; color: #f2e6da; }

.cursor { position: absolute; left: 568px; top: 317px; width: 6px; height: 9px; }
```
